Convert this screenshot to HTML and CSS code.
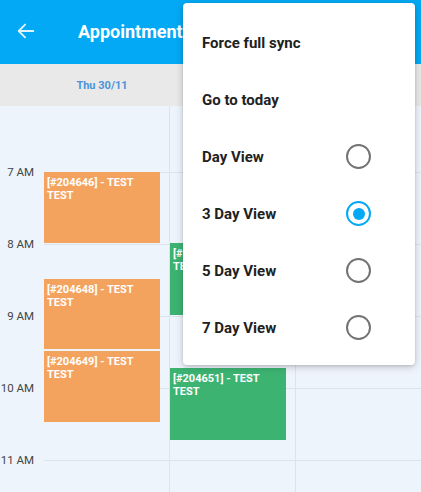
FILE: index.html
```html
<!DOCTYPE html>
<html lang="en">
<head>
  <meta charset="UTF-8">
  <title>Appointments</title>
  <link rel="stylesheet" href="styles.css">
</head>
<body>

<div class="screen">
  <header class="app-bar">
    <button class="back-btn" aria-label="Back">
      <svg width="22" height="22" viewBox="0 0 24 24"><path d="M20 12H4.5M11 5l-7 7 7 7" fill="none" stroke="#dff3fd" stroke-width="2" stroke-linecap="round" stroke-linejoin="round"/></svg>
    </button>
    <h1 class="title">Appointments</h1>
  </header>

  <div class="day-header">
    <div class="time-gutter"></div>
    <div class="day-label">Thu 30/11</div>
    <div class="day-label"></div>
    <div class="day-label"></div>
  </div>

  <div class="grid">
    <!-- Horas -->
    <div class="time-col">
      <span class="hour" style="top: 66px">7 AM</span>
      <span class="hour" style="top: 138px">8 AM</span>
      <span class="hour" style="top: 210px">9 AM</span>
      <span class="hour" style="top: 282px">10 AM</span>
      <span class="hour" style="top: 354px">11 AM</span>
    </div>

    <div class="day-col first">
      <div class="event orange" style="top: 66px; height: 71px">[#204646] - TEST<br>TEST</div>
      <div class="event orange" style="top: 173px; height: 70px">[#204648] - TEST<br>TEST</div>
      <div class="event orange" style="top: 245px; height: 71px">[#204649] - TEST<br>TEST</div>
    </div>

    <div class="day-col">
      <div class="event green" style="top: 137px; height: 72px">[#204650] - TEST<br>TEST</div>
      <div class="event green" style="top: 262px; height: 72px">[#204651] - TEST<br>TEST</div>
    </div>

    <div class="day-col"></div>
  </div>

  <!-- Menu de opciones -->
  <div class="menu">
    <div class="menu-item">Force full sync</div>
    <div class="menu-item">Go to today</div>
    <div class="menu-item">Day View <span class="radio"></span></div>
    <div class="menu-item">3 Day View <span class="radio checked"></span></div>
    <div class="menu-item">5 Day View <span class="radio"></span></div>
    <div class="menu-item">7 Day View <span class="radio"></span></div>
  </div>
</div>

</body>
</html>
```

FILE: styles.css
```css
:root {
  --color-primary: #03A9F4;
  --color-grid: #EEF4FB;
  --color-line: #DDE3EA;
  --color-orange: #F3A35E;
  --color-green: #3CB371;
  --color-text: #212121;
}

* {
  box-sizing: border-box;
}

body {
  margin: 0;
  font-family: Roboto, 'Noto Sans', sans-serif;
  background-color: var(--color-grid);
}

.screen {
  position: relative;
  width: 421px;
  height: 492px;
  overflow: hidden;
}

.app-bar {
  height: 64px;
  background-color: var(--color-primary);
  display: flex;
  align-items: center;
  padding-left: 14px;
}

.back-btn {
  background: none;
  border: none;
  padding: 0;
  width: 24px;
  height: 24px;
  display: flex;
  align-items: center;
  justify-content: center;
  margin-top: -2px;
}

.title {
  margin: -2px 0 0 40px;
  color: white;
  font-size: 18px;
  font-weight: 700;
}

.day-header {
  height: 42px;
  background-color: #E9E9E9;
  display: grid;
  grid-template-columns: 44px 125px 126px 126px;
  align-items: center;
}

.day-label {
  text-align: center;
  padding-right: 9px;
  font-size: 11px;
  font-weight: 700;
  color: #4B93D8;
}

.grid {
  height: 386px;
  display: grid;
  grid-template-columns: 44px 125px 126px 126px;
  background-color: var(--color-grid);
}

.time-col,
.day-col {
  position: relative;
}

/* Lineas de hora cada 72px */
.day-col {
  border-left: 1px solid var(--color-line);
  background-image: linear-gradient(to bottom, var(--color-line) 0, var(--color-line) 1px, transparent 1px);
  background-size: 100% 72px;
  background-position: 0 66px;
  background-repeat: repeat-y;
}

.day-col.first {
  border-left: none;
}

.hour {
  position: absolute;
  right: 10px;
  transform: translateY(-50%);
  font-size: 11.5px;
  color: #444;
}

.event {
  position: absolute;
  left: 0;
  width: 116px;
  padding: 4px 3px;
  font-size: 11px;
  font-weight: 700;
  line-height: 13px;
  color: white;
  overflow: hidden;
}

.orange {
  background-color: var(--color-orange);
}

.green {
  background-color: var(--color-green);
}

/* Menu */
.menu {
  position: absolute;
  top: 3px;
  left: 183px;
  width: 232px;
  padding: 11px 0 9px;
  background-color: white;
  border-radius: 4px;
  box-shadow: 0 2px 8px rgba(0, 0, 0, 0.18), 0 1px 3px rgba(0, 0, 0, 0.12);
}

.menu-item {
  height: 57px;
  display: flex;
  align-items: center;
  justify-content: space-between;
  padding: 0 44px 0 19px;
  font-size: 15px;
  font-weight: 700;
  color: var(--color-text);
}

.radio {
  width: 25px;
  height: 25px;
  border: 2px solid #737373;
  border-radius: 50%;
  display: flex;
  align-items: center;
  justify-content: center;
}

.radio.checked {
  border-color: var(--color-primary);
}

.radio.checked::after {
  content: '';
  width: 12px;
  height: 12px;
  border-radius: 50%;
  background-color: var(--color-primary);
}
```
